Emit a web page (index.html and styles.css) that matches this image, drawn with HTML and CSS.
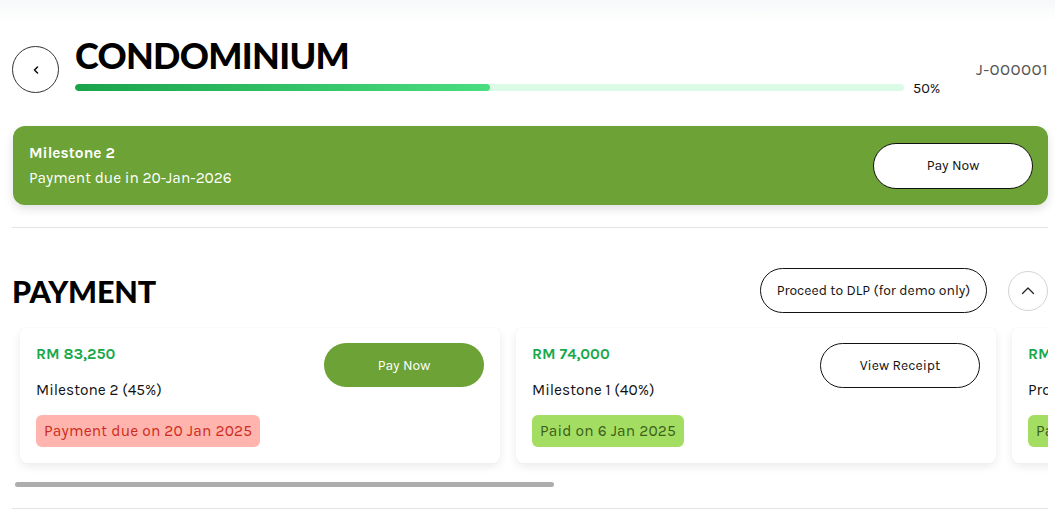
FILE: index.html
```html
<!DOCTYPE html>
<html>
<head>
<meta charset="utf-8">
<link rel="stylesheet" href="styles.css">
</head>
<body>
<div class="hero-fade"></div>
<main class="page">
  <header class="head">
    <button class="back" aria-label="Back">
      <svg width="12" height="12" viewBox="0 0 12 12"><path d="M7.5 3 L4.5 6 L7.5 9" fill="none" stroke="#111" stroke-width="1.6" stroke-linecap="round" stroke-linejoin="round"/></svg>
    </button>
    <div class="title-block">
      <h1 class="title">CONDOMINIUM</h1>
      <div class="progress-row">
        <div class="track"><div class="fill" style="width:50%"></div></div>
        <span class="pct">50%</span>
      </div>
    </div>
    <div class="job-id">J-000001</div>
  </header>

  <section class="banner">
    <div class="banner-text">
      <div class="banner-title">Milestone 2</div>
      <div class="banner-sub">Payment due in 20-Jan-2026</div>
    </div>
    <button class="btn btn-outline btn-banner">Pay Now</button>
  </section>

  <hr class="divider">

  <section class="payment-head">
    <h2 class="section-title">PAYMENT</h2>
    <div class="payment-actions">
      <button class="btn btn-outline btn-dlp">Proceed to DLP (for demo only)</button>
      <button class="circle-btn" aria-label="Collapse">
        <svg width="16" height="16" viewBox="0 0 16 16"><path d="M2.5 10.5 L8 5 L13.5 10.5" fill="none" stroke="#222" stroke-width="1.3" stroke-linecap="round" stroke-linejoin="round"/></svg>
      </button>
    </div>
  </section>

  <div class="cards-scroll">
    <div class="cards">
      <article class="card">
        <div class="card-info">
          <div class="amount">RM 83,250</div>
          <div class="milestone">Milestone 2 (45%)</div>
          <span class="badge badge-due">Payment due on 20 Jan 2025</span>
        </div>
        <button class="btn btn-green">Pay Now</button>
      </article>
      <article class="card">
        <div class="card-info">
          <div class="amount">RM 74,000</div>
          <div class="milestone">Milestone 1 (40%)</div>
          <span class="badge badge-paid">Paid on 6 Jan 2025</span>
        </div>
        <button class="btn btn-outline btn-card">View Receipt</button>
      </article>
      <article class="card">
        <div class="card-info">
          <div class="amount">RM 27,750</div>
          <div class="milestone">Progress Payment (15%)</div>
          <span class="badge badge-paid">Paid on 2 Jan 2025</span>
        </div>
        <button class="btn btn-outline btn-card">View Receipt</button>
      </article>
    </div>
  </div>
  <div class="scrollbar"><div class="thumb"></div></div>

  <hr class="divider divider-bottom">
</main>
</body>
</html>
```

FILE: styles.css
```css
* { box-sizing: border-box; }
html, body { margin: 0; padding: 0; background: #fff; }
body {
  font-family: "Karla", "Lato", "Liberation Sans", sans-serif;
  color: #111;
  width: 1055px;
  height: 512px;
  overflow: hidden;
  position: relative;
}
.hero-fade {
  position: absolute;
  left: 0; top: 0; right: 0;
  height: 22px;
  background: linear-gradient(180deg, #f4f6f8 0%, #ffffff 100%);
  opacity: 0.8;
}
.page {
  position: relative;
  padding: 0 7px 0 12px;
}
.head {
  display: flex;
  align-items: flex-start;
  padding-top: 37px;
}
.back {
  width: 47px; height: 47px;
  border-radius: 50%;
  border: 1px solid #333;
  background: #fff;
  display: flex; align-items: center; justify-content: center;
  margin-top: 9px;
  padding: 0;
  flex: none;
}
.title-block { margin-left: 16px; width: 868px; }
.title {
  margin: 0;
  font-family: "Lato", "Liberation Sans", sans-serif;
  font-weight: 900;
  font-size: 36px;
  line-height: 36px;
  letter-spacing: -0.7px;
  color: #000;
}
.progress-row {
  display: flex; align-items: center;
  margin-top: 4px;
}
.track {
  width: 829px; height: 7px;
  border-radius: 4px;
  background: #dcfbe6;
  overflow: hidden;
}
.fill {
  height: 100%;
  border-radius: 4px;
  background: linear-gradient(90deg, #1aa34a 0%, #4ade80 100%);
}
.pct { margin-left: 9px; font-size: 14.5px; line-height: 17px; color: #111; margin-top: 3px; }
.job-id {
  margin-left: auto;
  margin-top: 22px;
  font-size: 17px;
  color: #555;
  letter-spacing: 0.4px;
}
.banner {
  margin-top: 29px;
  margin-left: 1px;
  height: 79px;
  background: #6ca236;
  border-radius: 12px;
  box-shadow: 0 4px 10px rgba(0,0,0,0.12);
  display: flex; align-items: center; justify-content: space-between;
  padding: 0 15px 0 16px;
  color: #fff;
}
.banner-title { font-weight: 700; font-size: 15.5px; line-height: 20px; }
.banner-sub { font-size: 15.5px; line-height: 20px; margin-top: 5px; }
.btn {
  font-family: inherit;
  font-size: 14px;
  border-radius: 999px;
  cursor: pointer;
}
.btn-outline { background: #fff; border: 1px solid #111; color: #111; }
.btn-banner { width: 160px; height: 46px; }
.divider { border: 0; border-top: 1px solid #e2e2e2; margin: 22px 0 0; }
.payment-head {
  display: flex; align-items: center; justify-content: space-between;
  margin-top: 40px;
}
.section-title {
  margin: 0;
  font-family: "Lato", "Liberation Sans", sans-serif;
  font-weight: 900;
  font-size: 30.5px;
  line-height: 44px;
  color: #000;
  letter-spacing: -0.2px;
}
.payment-actions { display: flex; align-items: center; gap: 21px; }
.btn-dlp { height: 45px; padding: 0 12px; width: 227px; }
.circle-btn {
  width: 40px; height: 40px;
  border-radius: 50%;
  border: 1px solid #d4d4d8;
  background: #fff;
  display: flex; align-items: center; justify-content: center;
  padding: 0;
}
.cards-scroll {
  margin-top: 14px;
  overflow: hidden;
  padding: 1px 0 19px 8px;
}
.cards { display: flex; gap: 16px; }
.card {
  flex: none;
  width: 480px;
  height: 135px;
  background: #fff;
  border-radius: 8px;
  box-shadow: 0 3px 10px rgba(0,0,0,0.09);
  display: flex; justify-content: space-between; align-items: flex-start;
  padding: 15px 16px 16px;
}
.card-info { display: flex; flex-direction: column; align-items: flex-start; }
.amount { color: #17a84a; font-weight: 700; font-size: 15.5px; line-height: 20px; margin-top: 1px; }
.milestone { font-size: 15.5px; line-height: 20px; margin-top: 16px; }
.badge {
  margin-top: 15px;
  font-size: 15.5px;
  line-height: 20px;
  padding: 6px 8px;
  border-radius: 6px;
  letter-spacing: 0.2px;
}
.badge-due { background: #ffb5ad; color: #cc2b1e; }
.badge-paid { background: #a3de62; color: #3b5e1c; }
.btn-green { background: #6ca236; color: #fff; border: 0; width: 160px; height: 44px; }
.btn-card { width: 160px; height: 45px; }
.scrollbar { height: 5px; margin: 0 0 0 3px; }
.thumb { width: 539px; height: 5px; border-radius: 3px; background: #adadad; }
.divider-bottom { margin-top: 21px; }
```
